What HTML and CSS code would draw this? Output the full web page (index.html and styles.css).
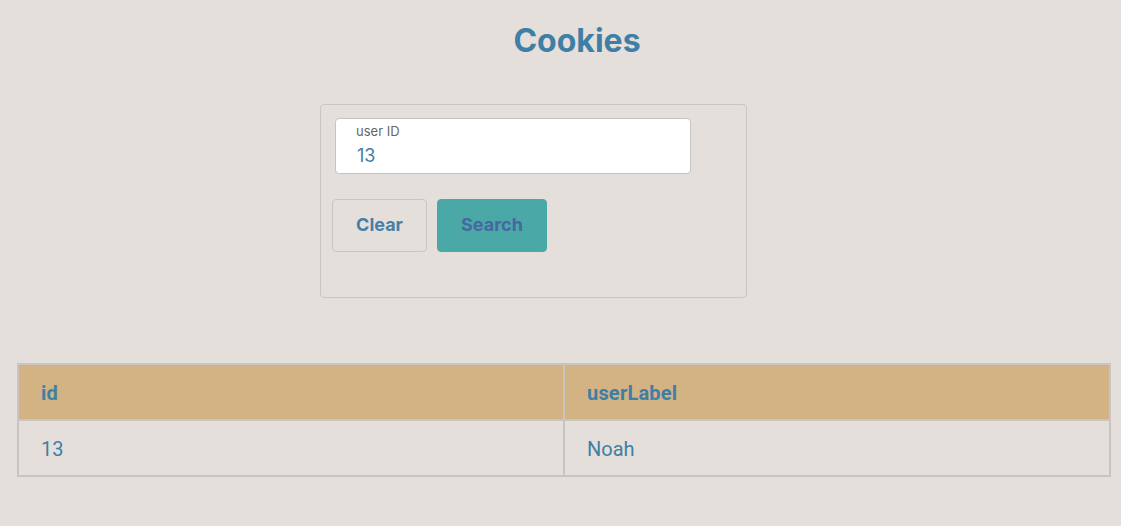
FILE: index.html
```html
<!DOCTYPE html>
<html>
<head>
<meta charset="utf-8">
<link rel="stylesheet" href="styles.css">
</head>
<body>
<div class="page">
  <h1 class="title">Cookies</h1>
  <div class="card">
    <div class="field">
      <span class="field-label">user ID</span>
      <span class="field-value">13</span>
    </div>
    <div class="actions">
      <button class="btn btn-clear">Clear</button>
      <button class="btn btn-search">Search</button>
    </div>
  </div>
  <table class="grid">
    <thead>
      <tr><th class="col-id">id</th><th>userLabel</th></tr>
    </thead>
    <tbody>
      <tr><td class="col-id">13</td><td>Noah</td></tr>
    </tbody>
  </table>
</div>
</body>
</html>
```

FILE: styles.css
```css
html, body {
  margin: 0;
  padding: 0;
  background: #e4dfdb;
}
.page {
  width: 1121px;
  height: 526px;
  display: flex;
  flex-direction: column;
  font-family: Inter, "Noto Sans", sans-serif;
}
.title {
  margin: 19px 0 0 0;
  padding-left: 33px;
  text-align: center;
  font-size: 32px;
  font-weight: 700;
  line-height: 44px;
  color: #3f7fa6;
}
.card {
  margin: 41px 0 0 320px;
  width: 425px;
  height: 192px;
  border: 1px solid #c9c5c2;
  border-radius: 4px;
  box-sizing: content-box;
  padding: 0;
  display: flex;
  flex-direction: column;
}
.field {
  margin: 13px 0 0 14px;
  background: #ffffff;
  border: 1px solid #c4c4c4;
  border-radius: 4px;
  display: flex;
  flex-direction: column;
  padding: 4px 0 0 20px;
  box-sizing: content-box;
  width: 334px;
  height: 50px;
}
.field-label {
  font-size: 13px;
  line-height: 16px;
  color: #666666;
}
.field-value {
  font-size: 18px;
  line-height: 26px;
  margin-top: 4px;
  color: #3f7fa6;
  padding-left: 1px;
}
.actions {
  display: flex;
  gap: 10px;
  margin: 25px 0 0 11px;
}
.btn {
  height: 53px;
  border-radius: 4px;
  font-family: Inter, "Noto Sans", sans-serif;
  font-size: 18px;
  font-weight: 700;
  padding: 0 0 2px 0;
  box-sizing: border-box;
}
.btn-clear {
  width: 95px;
  background: transparent;
  border: 1px solid #c9c5c2;
  color: #4680a8;
}
.btn-search {
  width: 110px;
  background: #4aa8a6;
  border: 1px solid #4aa8a6;
  color: #4767a2;
}
.grid {
  margin: 65px 0 0 17px;
  width: 1094px;
  border-collapse: collapse;
  border: 2px solid #c8c4c1;
  font-family: Roboto, "Noto Sans", sans-serif;
  font-size: 20px;
  color: #3f7fa6;
}
.grid th, .grid td {
  border: 2px solid #c8c4c1;
  text-align: left;
  padding: 2px 0 0 22px;
  height: 56px;
  box-sizing: border-box;
}
.grid th {
  background: #d3b383;
  font-weight: 700;
  letter-spacing: 0.2px;
}
.grid td {
  font-weight: 400;
}
.col-id {
  width: 546px;
}
```
